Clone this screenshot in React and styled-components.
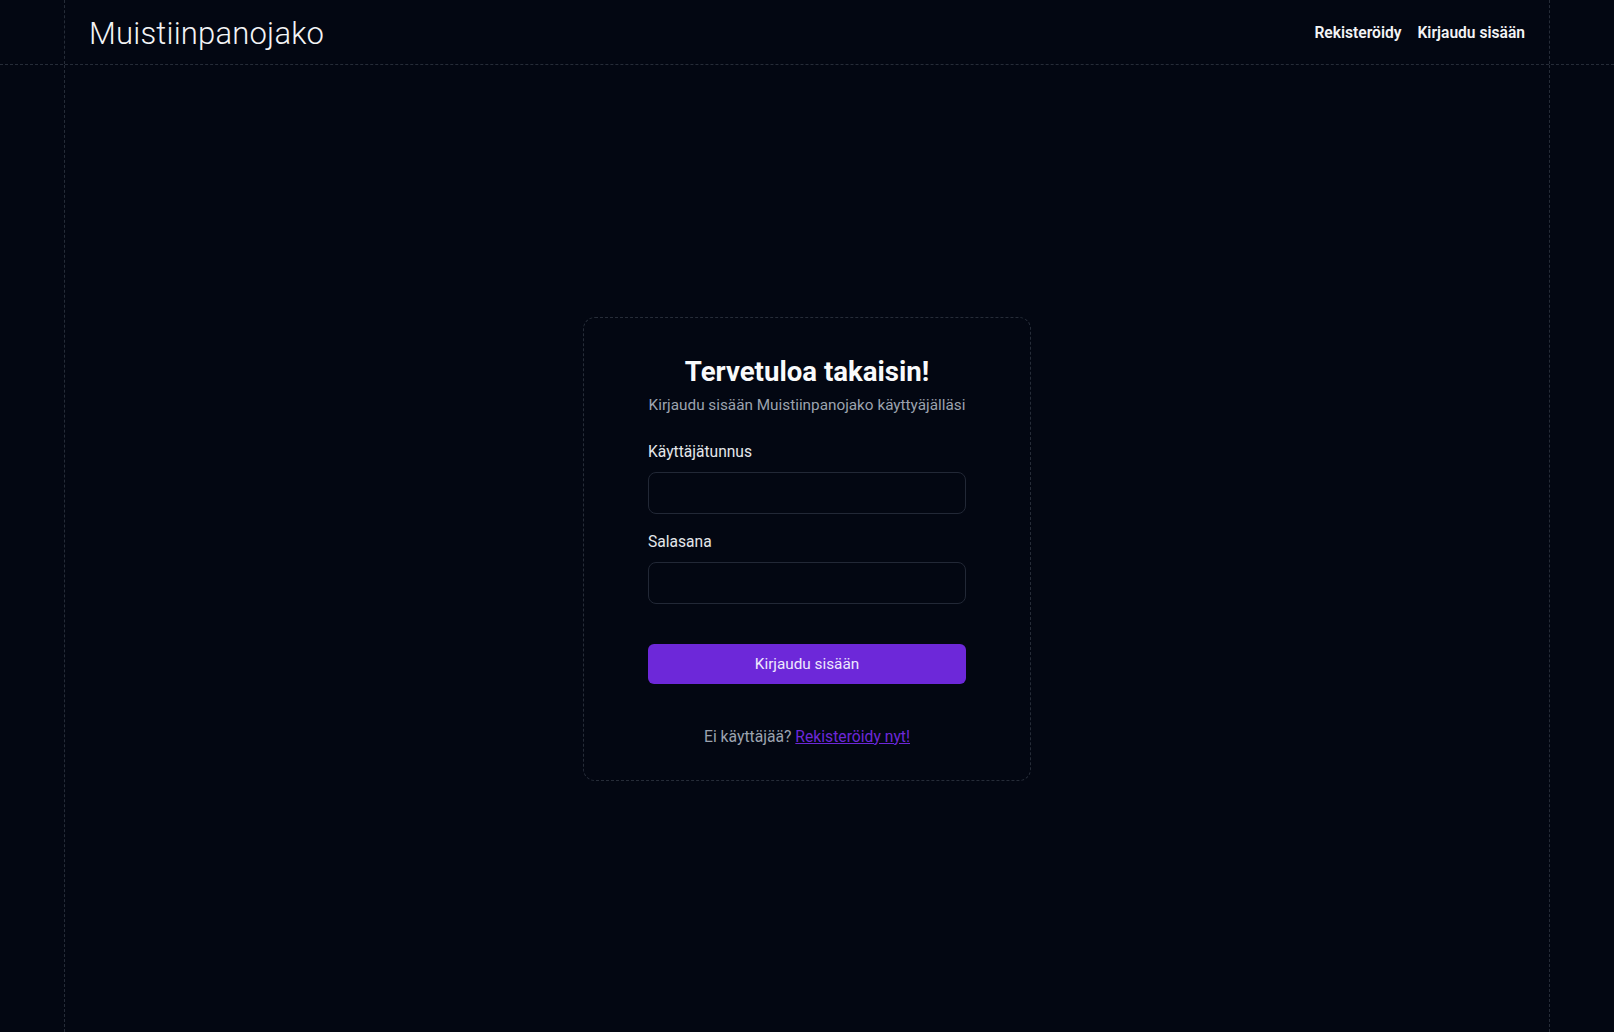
import React from 'react';
import styled, { createGlobalStyle } from 'styled-components';

const GlobalStyle = createGlobalStyle`
	html, body {
		margin: 0;
		padding: 0;
		background: #030712;
		color: #f9fafb;
		font-family: Roboto, "Liberation Sans", sans-serif;
	}
	* {
		box-sizing: border-box;
	}
`;

const Page = styled.div`
	min-height: 100vh;
	display: flex;
	flex-direction: column;
`;

const Header = styled.header`
	border-bottom: 1px dashed #262c38;
`;

const Frame = styled.div`
	margin: 0 64px;
	border-left: 1px dashed #262c38;
	border-right: 1px dashed #262c38;
`;

const HeaderInner = styled(Frame)`
	height: 64px;
	padding: 2px 24px 0 24px;
	display: flex;
	align-items: center;
	justify-content: space-between;
`;

const Logo = styled.a`
	font-size: 31px;
	font-weight: 300;
	color: #f3f4f6;
	text-decoration: none;
	letter-spacing: 0.2px;
`;

const Nav = styled.nav`
	display: flex;
	gap: 16px;
`;

const NavLink = styled.a`
	font-size: 15.6px;
	font-weight: 600;
	color: #f3f4f6;
	text-decoration: none;
`;

const Main = styled(Frame)`
	flex: 1;
	display: flex;
	align-items: center;
	justify-content: center;
`;

const Card = styled.div`
	width: 448px;
	border: 1px dashed #262c38;
	border-radius: 12px;
	padding: 36px 64px 31px;
	display: flex;
	flex-direction: column;
`;

const Title = styled.h1`
	margin: 0;
	text-align: center;
	font-size: 27.6px;
	line-height: 36px;
	font-weight: 700;
	color: #f9fafb;
`;

const Subtitle = styled.p`
	margin: 3px 0 0;
	text-align: center;
	font-size: 15.3px;
	line-height: 24px;
	color: #9ca3af;
`;

const Form = styled.form`
	margin-top: 23px;
	display: flex;
	flex-direction: column;
`;

const Field = styled.div`
	display: flex;
	flex-direction: column;
	gap: 8px;
	margin-bottom: ${p => p.$last ? '40px' : '16px'};
`;

const Label = styled.label`
	font-size: 15.6px;
	line-height: 24px;
	color: #e5e7eb;
`;

const Input = styled.input`
	height: 42px;
	width: 100%;
	border: 1px solid #222836;
	border-radius: 8px;
	background: #030712;
	color: #f9fafb;
	padding: 0 12px;
	font-size: 15px;
	outline: none;
`;

const Button = styled.button`
	height: 40px;
	border: none;
	border-radius: 6px;
	background: #6d28d9;
	color: #ede9fe;
	font-family: inherit;
	font-size: 15.3px;
	cursor: pointer;
`;

const Footer = styled.p`
	margin: 41px 0 0;
	text-align: center;
	font-size: 15.7px;
	line-height: 24px;
	color: #9ca3af;

	a {
		color: #6d28d9;
		text-decoration: underline;
	}
`;

export default function App() {
	return (
		<>
			<GlobalStyle />
			<Page>
				<Header>
					<HeaderInner>
						<Logo href="#">Muistiinpanojako</Logo>
						<Nav>
							<NavLink href="#">Rekisteröidy</NavLink>
							<NavLink href="#">Kirjaudu sisään</NavLink>
						</Nav>
					</HeaderInner>
				</Header>
				<Main>
					<Card>
						<Title>Tervetuloa takaisin!</Title>
						<Subtitle>Kirjaudu sisään Muistiinpanojako käyttyäjälläsi</Subtitle>
						<Form onSubmit={e => e.preventDefault()}>
							<Field>
								<Label htmlFor="username">Käyttäjätunnus</Label>
								<Input id="username" type="text" />
							</Field>
							<Field $last>
								<Label htmlFor="password">Salasana</Label>
								<Input id="password" type="password" />
							</Field>
							<Button type="submit">Kirjaudu sisään</Button>
						</Form>
						<Footer>
							Ei käyttäjää? <a href="#">Rekisteröidy nyt!</a>
						</Footer>
					</Card>
				</Main>
			</Page>
		</>
	);
}
